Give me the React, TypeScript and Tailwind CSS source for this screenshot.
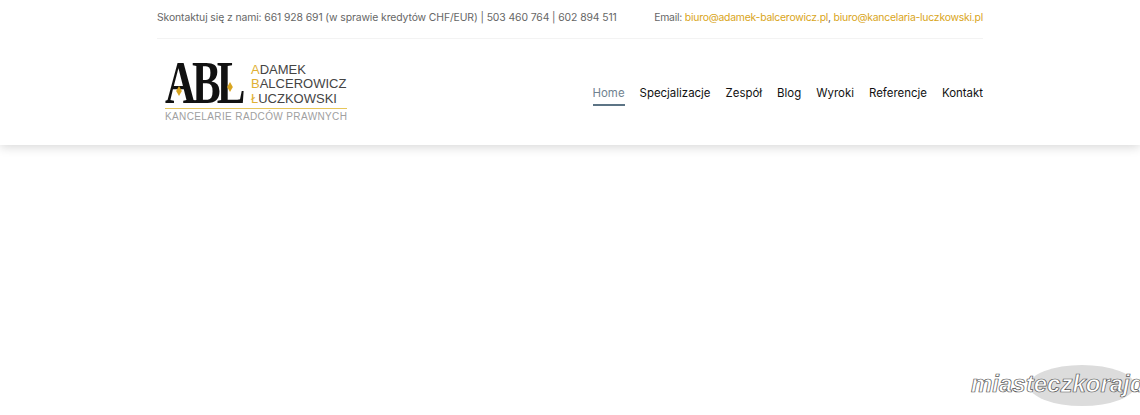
const NAV_ITEMS = ['Specjalizacje', 'Zespół', 'Blog', 'Wyroki', 'Referencje', 'Kontakt'];

function Diamond({ className }: { className: string }) {
  return (
    <svg viewBox="0 0 8 14" className={className}>
      <path d="M4 0 L8 7 L4 14 L0 7 Z" fill="#d9a520" />
    </svg>
  );
}

function Logo() {
  return (
    <div className="w-[182px] flex flex-col font-['Liberation_Sans',sans-serif]">
      <div className="flex items-center h-[45px]">
        <div className="relative w-[78px] h-[45px] shrink-0 text-[#111]">
          <div className="pt-[12px] font-['Liberation_Serif',serif] font-bold text-[43px] tracking-[-4px] whitespace-nowrap">
            <div className="leading-[30px] scale-y-[1.4] origin-bottom">ABL</div>
          </div>
          <Diamond className="absolute left-[11px] top-[24px] w-[6px] h-[10px]" />
          <Diamond className="absolute left-[62px] top-[20px] w-[6px] h-[10px]" />
        </div>
        <div className="ml-[8px] flex flex-col text-[13px] leading-[14.5px] text-[#444] whitespace-nowrap pt-[1px]">
          <div><span className="text-[#e0b033]">A</span>DAMEK</div>
          <div><span className="text-[#e0b033]">B</span>ALCEROWICZ</div>
          <div><span className="text-[#e0b033]">Ł</span>UCZKOWSKI</div>
        </div>
      </div>
      <div className="h-px bg-[#e6c65a] mt-[1px]" />
      <div className="mt-[2px] text-[10px] leading-[12px] text-[#a0a0a0] whitespace-nowrap tracking-[0.38px]">
        KANCELARIE RADCÓW PRAWNYCH
      </div>
    </div>
  );
}

export default function App() {
  return (
    <div className="relative h-[415px] overflow-hidden bg-white font-['Inter',sans-serif]">
      <header className="bg-white shadow-[0_2px_10px_rgba(0,0,0,0.16)]">
        <div className="mx-auto w-[826px]">
          {/* Top bar */}
          <div className="flex justify-between items-center h-[39px] pb-[2px] border-b border-[#f3f3f3] text-[10.4px] text-[#666] whitespace-nowrap">
            <span className="tracking-[-0.1px]">Skontaktuj się z nami: 661 928 691 (w sprawie kredytów CHF/EUR) | 503 460 764 | 602 894 511</span>
            <span className="tracking-[-0.22px]">
              Email: <a className="text-[#d9a520]">biuro@adamek-balcerowicz.pl</a>,{' '}
              <a className="text-[#d9a520]">biuro@kancelaria-luczkowski.pl</a>
            </span>
          </div>
          {/* Main nav */}
          <div className="flex justify-between items-center h-[106px]">
            <div className="pl-[8px]">
              <Logo />
            </div>
            <nav className="flex items-center gap-[15px] text-[11.45px] text-[#111] pt-[3px]">
              <a className="text-[#6f8290] border-b-2 border-[#5c7485] pt-[4px] pb-[1px]">Home</a>
              {NAV_ITEMS.map((item) => (
                <a key={item} className="pt-[4px] pb-[3px]">{item}</a>
              ))}
            </nav>
          </div>
        </div>
      </header>

      {/* Watermark */}
      <div className="absolute left-[1029px] top-[365px] w-[106px] h-[41px] rounded-[50%] bg-[#dcdcdc]" />
      <div className="absolute left-[971px] top-[367px] whitespace-nowrap font-['Liberation_Sans',sans-serif] font-bold italic text-[24px] leading-[34px] text-white [-webkit-text-stroke:0.7px_#555]">
        miasteczkorajd
      </div>
    </div>
  );
}
